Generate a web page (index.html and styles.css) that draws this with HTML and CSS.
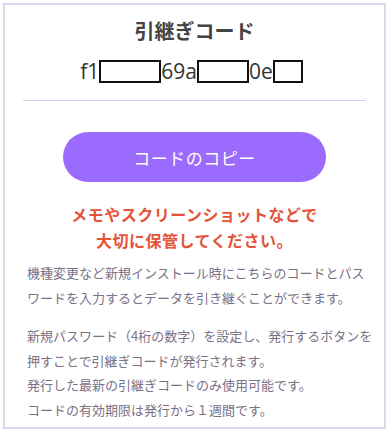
FILE: index.html
```html
<!DOCTYPE html>
<html lang="ja">
<head>
    <meta charset="UTF-8">
    <meta name="viewport" content="width=device-width, initial-scale=1.0">
    <title>引継ぎコード</title>
    <link rel="stylesheet" href="styles.css">
</head>
<body>
    <div class="card">
        <h1 class="title">引継ぎコード</h1>
        <div class="code">
            <span>f1</span><span class="mask mask-l"></span><span>69a</span><span class="mask mask-m"></span><span>0e</span><span class="mask mask-s"></span>
        </div>
        <hr class="divider">
        <button class="copy-btn">コードのコピー</button>
        <p class="warning">メモやスクリーンショットなどで<br>大切に保管してください。</p>
        <div class="notes">
            <p>機種変更など新規インストール時にこちらのコードとパス<br>ワードを入力するとデータを引き継ぐことができます。</p>
            <p>新規パスワード（4桁の数字）を設定し、発行するボタンを<br>押すことで引継ぎコードが発行されます。<br>発行した最新の引継ぎコードのみ使用可能です。<br>コードの有効期限は発行から１週間です。</p>
        </div>
    </div>
</body>
</html>
```

FILE: styles.css
```css
body {
    margin: 3px;
    font-family: "Noto Sans CJK JP", "Noto Sans", sans-serif;
    background: #fff;
}
.card {
    height: 426px;
    box-sizing: border-box;
    border: 2px solid #dcd8ee;
    padding: 12px 0 0;
}
.title {
    margin: 0;
    text-align: center;
    font-size: 20px;
    font-weight: bold;
    line-height: 28px;
    color: #444;
}
.code {
    display: flex;
    justify-content: center;
    align-items: center;
    margin-top: 12px;
    height: 28px;
    font-family: "Open Sans", "Noto Sans", sans-serif;
    font-size: 21px;
    color: #333;
    padding-right: 6px;
}
.mask {
    display: inline-block;
    height: 23px;
    box-sizing: border-box;
    border: 2px solid #111;
    background: #fff;
}
.mask-l { width: 62px; }
.mask-m { width: 52px; }
.mask-s { width: 30px; }
.divider {
    margin: 15px 18px 0;
    border: none;
    border-top: 1px solid #d6cbf4;
}
.copy-btn {
    display: block;
    margin: 31px auto 0;
    width: 263px;
    height: 50px;
    border: none;
    border-radius: 25px;
    background: #9b6bfd;
    color: #fff;
    font-family: inherit;
    font-size: 17px;
    letter-spacing: 0.5px;
}
.warning {
    margin: 19px 0 0;
    text-align: center;
    font-size: 16px;
    font-weight: bold;
    line-height: 26px;
    letter-spacing: 0.5px;
    color: #e5523a;
}
.notes {
    margin-top: 8px;
    padding: 0 0 0 22px;
    font-size: 13px;
    line-height: 24.5px;
    color: #7a7186;
    white-space: nowrap;
}
.notes p {
    margin: 0 0 14px;
}
```
